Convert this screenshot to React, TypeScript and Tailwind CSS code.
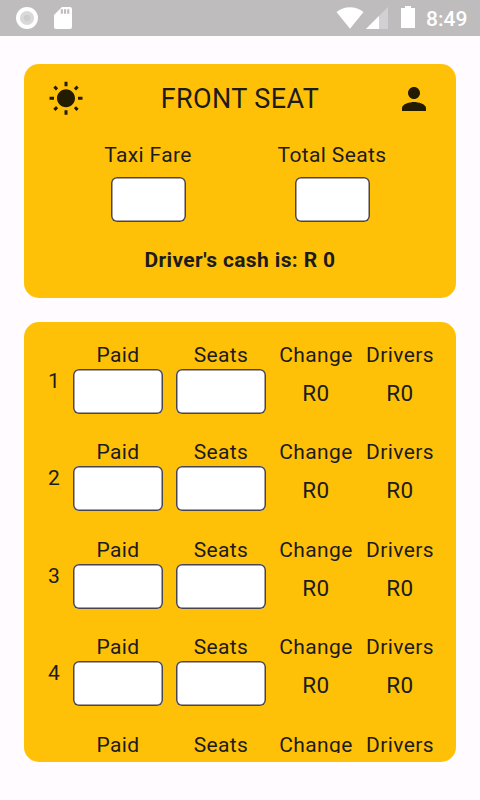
import React from "react";

const inputStyle =
  "block appearance-none rounded-[6px] bg-white px-3 text-[21px] shadow-[inset_0_0_0_1.5px_#49454f] outline-none";

function StatusBar() {
  return (
    <header className="flex h-9 shrink-0 items-center bg-[#bebcbd] text-white">
      <svg className="ml-4 h-[22px] w-[22px]" viewBox="0 0 22 22">
        <circle cx="11" cy="11" r="11" fill="#fff" />
        <circle cx="11" cy="11" r="7.1" fill="#dad9da" />
        <circle cx="11" cy="11" r="3.3" fill="#cecdce" />
      </svg>
      <svg className="ml-4 h-[22px] w-[18px]" viewBox="0 0 18 22">
        <path fill="#fff" d="M8 0h8a2 2 0 0 1 2 2v18a2 2 0 0 1-2 2H2a2 2 0 0 1-2-2V8z" />
        <path fill="#bebcbd" d="M6.8 2.2h2.1v4.6H6.8zM10 2.2h2.1v4.6H10zM13.2 2.2h2.1v4.6h-2.1z" />
      </svg>
      <svg className="ml-auto h-[22px] w-[28px]" viewBox="0 0 28 22">
        <path fill="#fff" d="M14 21.7 0.5 5.1C4.2 1.8 9 0.2 14 0.2s9.800 1.600 13.500 4.900z" />
      </svg>
      <svg className="ml-[2px] h-[22px] w-[22px]" viewBox="0 0 22 22">
        <path fill="#d2d0d4" d="M22 0v22H0z" />
        <path fill="#fff" d="M13 9v13H0z" />
      </svg>
      <svg className="mb-[2px] ml-[13px] h-[22px] w-[14px]" viewBox="0 0 14 22">
        <path fill="#fff" d="M4 0h6v2h4v20H0V2h4z" />
      </svg>
      <span className="mt-px mr-3 ml-[11px] w-[42px] text-[21px] leading-9 font-medium">8:49</span>
    </header>
  );
}

function SummaryCard() {
  return (
    <section className="mx-6 mt-7 h-[234px] shrink-0 rounded-[15px] bg-[#ffc107] px-6 pt-[17px]">
      <div className="flex h-9 items-center justify-between">
        <svg className="h-9 w-9" viewBox="0 0 24 24" fill="#231c01">
          <path d="M6.760 4.840l-1.800-1.790-1.410 1.410 1.790 1.790 1.420-1.410zM4 10.500H1v2h3v-2zm9-9.950h-2V3.500h2V.55zm7.450 3.910l-1.410-1.410-1.790 1.790 1.410 1.410 1.790-1.790zm-3.210 13.700l1.790 1.800 1.410-1.410-1.800-1.790-1.400 1.400zM20 10.500v2h3v-2h-3zm-8-5c-3.310 0-6 2.690-6 6s2.690 6 6 6 6-2.690 6-6-2.690-6-6-6zm-1 16.950h2V19.500h-2v2.950zm-7.450-3.910l1.410 1.410 1.790-1.800-1.410-1.410-1.790 1.800z" />
        </svg>
        <h1 className="text-[27px] leading-9 tracking-[0.375px]">FRONT SEAT</h1>
        <svg className="h-9 w-9" viewBox="0 0 24 24" fill="#231c01">
          <path d="M12 12c2.210 0 4-1.790 4-4s-1.790-4-4-4-4 1.790-4 4 1.790 4 4 4zm0 2c-2.670 0-8 1.340-8 4v2h16v-2c0-2.660-5.330-4-8-4z" />
        </svg>
      </div>
      <div className="mt-[26px] grid grid-cols-[200px_168px] justify-start">
        <label className="flex flex-col items-center">
          <span className="text-[21px] leading-6 tracking-[0.375px]">Taxi Fare</span>
          <input className={`${inputStyle} mt-[9.5px] h-[45px] w-[75px]`} />
        </label>
        <label className="flex flex-col items-center">
          <span className="text-[21px] leading-6 tracking-[0.375px]">Total Seats</span>
          <input className={`${inputStyle} mt-[9.5px] h-[45px] w-[75px]`} />
        </label>
      </div>
      <p className="mt-[26.5px] text-center text-[21px] leading-6 font-bold tracking-[0.375px]">
        Driver's cash is: R 0
      </p>
    </section>
  );
}

function SeatRow({ n }: { n: number }) {
  return (
    <div className="flex h-[97.5px] shrink-0 items-start text-[21px] leading-6 tracking-[0.375px]">
      <span className="mt-[26px] w-[25px] shrink-0">{n}</span>
      <label className="flex w-[90px] shrink-0 flex-col items-center">
        <span>Paid</span>
        <input className={`${inputStyle} mt-[2px] h-[45px] w-[90px]`} />
      </label>
      <label className="ml-[13px] flex w-[90px] shrink-0 flex-col items-center">
        <span>Seats</span>
        <input className={`${inputStyle} mt-[2px] h-[45px] w-[90px]`} />
      </label>
      <div className="ml-[13px] flex w-[74px] shrink-0 flex-col items-center">
        <span>Change</span>
        <span className="mt-[14px] text-[22.5px] tracking-[0.375px]">R0</span>
      </div>
      <div className="ml-[13px] flex w-[68px] shrink-0 flex-col items-center">
        <span>Drivers</span>
        <span className="mt-[14px] text-[22.5px] tracking-[0.375px]">R0</span>
      </div>
    </div>
  );
}

export default function App() {
  return (
    <div className="flex h-[800px] w-[480px] flex-col overflow-hidden bg-[#fffbfe] font-['Roboto',sans-serif] text-[#1c1b1f]">
      <StatusBar />
      <SummaryCard />
      <section className="mx-6 mt-6 h-[440px] shrink-0 rounded-[15px] bg-[#ffc107] py-[9px] pl-6">
        <div className="flex h-[422px] flex-col overflow-hidden pt-[11.8px]">
          {[1, 2, 3, 4, 5].map((n) => (
            <SeatRow key={n} n={n} />
          ))}
        </div>
      </section>
    </div>
  );
}
